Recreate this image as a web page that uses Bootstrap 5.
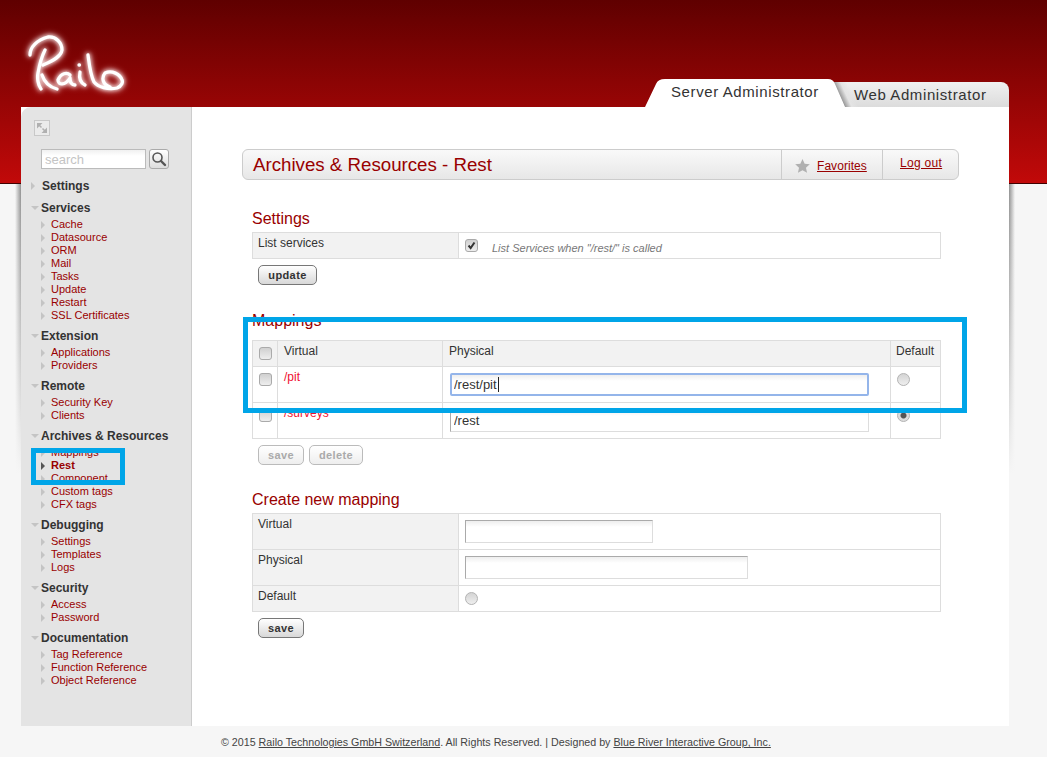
<!DOCTYPE html>
<html lang="en">
<head>
    <meta charset="utf-8">
    <title>Archives &amp; Resources - Rest</title>
    <link rel="stylesheet" href="https://cdn.jsdelivr.net/npm/bootstrap@5.3.0/dist/css/bootstrap.min.css">
    <style>
        body {
            position: relative;
            min-height: 757px;
            font-family: "Liberation Sans", Arial, sans-serif;
            font-size: 12px;
            color: #333;
            background:
                linear-gradient(#400000, #400000) 0 183px / 100% 1px no-repeat,
                linear-gradient(#5f0000, #c20909) 0 0 / 100% 184px no-repeat,
                linear-gradient(rgba(246, 246, 246, 0), #f6f6f6) 15px 184px / 6px 290px no-repeat,
                linear-gradient(to right, rgba(0, 0, 0, 0), rgba(0, 0, 0, .42)) 15px 184px / 6px 290px no-repeat,
                linear-gradient(rgba(246, 246, 246, 0), #f6f6f6) 1009px 184px / 6px 290px no-repeat,
                linear-gradient(to left, rgba(0, 0, 0, 0), rgba(0, 0, 0, .42)) 1009px 184px / 6px 290px no-repeat,
                #f6f6f6;
        }

        /* header */
        .top-bar {
            height: 107px;
            padding-right: 38px;
        }

        .logo-mark {
            margin: 32px 0 0 24px;
            filter: drop-shadow(0 0 2px #fff) drop-shadow(0 0 3px rgba(255, 210, 210, .7));
        }

        .tab-server, .tab-web {
            display: flex;
            align-items: center;
            letter-spacing: .6px;
            color: #333;
            font-size: 15px;
        }

        .tab-server {
            position: relative;
            z-index: 1;
            width: 200px;
            height: 28px;
            padding: 0 0 2px 26px;
            background: #fff;
            clip-path: path("M0 28 L11 5 Q13 0 20 0 L183 0 Q188 0 190 5 L200 28 Z");
        }

        .tab-web {
            width: 177px;
            height: 25px;
            margin-left: -13px;
            padding: 2px 0 0 22px;
            border-radius: 0 8px 0 0;
            background:
                linear-gradient(65deg, transparent 11px, #999 12px, #e4e4e4 18px, transparent 24px),
                linear-gradient(#f0f0f0, #dcdcdc);
        }

        /* page frame */
        .page-frame {
            width: 988px;
            height: 619px;
            margin-left: 21px;
            background: #fff;
        }

        .side-col {
            flex: 0 0 171px;
            padding: 13px 0 0 10px;
            border-right: 1px solid #ccc;
            border-top-left-radius: 10px;
            background: #e4e4e4;
        }

        .expand-box {
            display: block;
            width: 16px;
            height: 16px;
            margin: 0 0 13px 3px;
        }

        .search-row {
            gap: 3px;
            margin: 0 0 9px 10px;
        }

        .search-box {
            width: 105px;
            height: 20px;
            padding: 0 3px;
            border: 1px solid #bbb;
            border-radius: 0;
            font-size: 13px;
            line-height: 18px;
            background: linear-gradient(#f0f0f0, #fff 6px);
        }

        .search-box::placeholder {
            color: #c4c4c4;
        }

        .search-go {
            width: 20px;
            height: 20px;
            padding: 0;
            border: 1px solid #aaa;
            border-radius: 3px;
            background: linear-gradient(#fff, #ddd);
        }

        .side-group {
            margin-bottom: 6px;
        }

        .side-group.group-solo {
            margin-bottom: 7px;
        }

        .side-head, .side-link {
            display: flex;
            align-items: center;
        }

        .side-head {
            height: 15px;
            margin-bottom: 3px;
            font-weight: 700;
            color: #333;
        }

        .side-head::before {
            content: "";
            width: 0;
            margin-right: 7px;
            border-style: solid;
            border-width: 4px 0 4px 4px;
            border-color: transparent transparent transparent #c4c4c4;
        }

        .side-head.is-open::before {
            margin-right: 2px;
            border-width: 4px 4px 0;
            border-color: #c4c4c4 transparent transparent;
        }

        .side-link {
            height: 13px;
            padding-left: 10px;
            font-size: 11px;
            color: #900;
            text-decoration: none;
        }

        .side-link::before {
            content: "";
            width: 0;
            margin-right: 6px;
            border-style: solid;
            border-width: 4px 0 4px 4px;
            border-color: transparent transparent transparent #c4c4c4;
        }

        .side-link.is-current {
            font-weight: 700;
        }

        .side-link.is-current::before {
            border-left-color: #555;
        }

        /* main column */
        .main-col {
            padding: 42px 50px 0;
        }

        .title-strip {
            height: 31px;
            margin-bottom: 28px;
            border: 1px solid #ccc;
            border-radius: 6px;
            background: linear-gradient(#f9f9f9, #e7e7e7);
        }

        .title-strip h1 {
            margin: 0;
            padding-left: 10px;
            font-size: 18.7px;
            line-height: 30px;
            font-weight: 400;
            color: #900;
        }

        .strip-cell {
            display: flex;
            align-items: center;
            border-left: 1px solid #ccc;
            letter-spacing: .05px;
        }

        .strip-cell a {
            color: #900;
        }

        .cell-fav {
            width: 101px;
            gap: 7px;
            padding: 2px 0 0 13px;
        }

        .cell-out {
            width: 76px;
            padding: 0 0 3px 17px;
            letter-spacing: .3px;
        }

        .form-block {
            margin: 0 18px 0 10px;
        }

        .form-block h2 {
            margin: 0 0 3px;
            padding-top: 1px;
            font-size: 16px;
            line-height: 20px;
            font-weight: 400;
            color: #900;
        }

        .table.res-table {
            --bs-table-border-color: #ddd;
            table-layout: fixed;
            width: 689px;
            margin: 0;
            font-size: 12px;
            line-height: 15px;
        }

        .table.res-table > tbody > tr > * {
            padding: 3px 6px;
            color: #333;
            font-weight: 400;
            background: #fff;
            box-shadow: none;
        }

        .table.res-table > tbody > tr > .cell-shade {
            background: #f2f2f2;
        }

        .table.res-table > tbody > tr > .cell-label {
            padding-left: 5px;
        }

        .table.res-table > tbody > tr > .cell-virtual {
            color: #f01030;
        }

        .table.res-table > tbody > tr > .cell-mid {
            padding-top: 6px;
        }

        .table.res-table > tbody > tr > .cell-flat {
            padding-bottom: 0;
        }

        .table.res-table > tbody > tr > .cell-narrow {
            padding-left: 5px;
            padding-right: 0;
        }

        .form-check-input.res-check {
            display: block;
            width: 13px;
            height: 13px;
            margin: 3px 0 0;
            border: 1px solid #aaa;
            background: linear-gradient(#d0d0d0, #eee);
            box-shadow: none;
        }

        .form-check-input.res-check:checked {
            background: url("data:image/svg+xml,%3Csvg xmlns='http://www.w3.org/2000/svg' viewBox='0 0 13 13'%3E%3Cpath d='M3 6.5l2.500 3L10 3' fill='none' stroke='%23333' stroke-width='2.4'/%3E%3C/svg%3E"), linear-gradient(#d0d0d0, #eee);
            border-color: #aaa;
        }

        .form-check-input.res-radio {
            display: block;
            width: 13px;
            height: 13px;
            margin: 3px 0 0;
            border: 1px solid #b4b4b4;
            background: linear-gradient(#d4d4d4, #eee);
            box-shadow: none;
        }

        .form-check-input.res-radio:checked {
            background: radial-gradient(circle, #555 0 2.5px, #ddd 3.5px);
            border-color: #b4b4b4;
        }

        .cell-mid .form-check-input {
            margin-top: 0;
        }

        .form-control.res-input {
            height: 23px;
            min-height: 0;
            padding: 1px 3px;
            border: 1px solid #ddd;
            border-top-color: #aaa;
            border-left-color: #aaa;
            border-radius: 0;
            font-size: 13px;
            color: #333;
            background: linear-gradient(#eee, #fff 6px);
            box-shadow: none;
        }

        /* focused field of the screenshot, the caret is part of its look */
        .form-control.res-input.is-focused {
            border: 2px solid #94b5ea;
            border-radius: 2px;
            padding: 0 2px;
            background:
                linear-gradient(#222, #222) 46px 2px / 1px 15px no-repeat,
                linear-gradient(#eee, #fff 6px);
        }

        .input-path {
            width: 419px;
            margin-left: 1px;
        }

        .input-short {
            width: 188px;
        }

        .input-long {
            width: 283px;
        }

        .hint-text {
            margin: 5px 0 0 14px;
            font-size: 11px;
            font-style: italic;
            color: #777;
        }

        .btn.res-btn {
            --bs-btn-padding-x: 0;
            --bs-btn-padding-y: 0;
            height: 20px;
            width: 46px;
            border: 1px solid #777;
            border-radius: 5px;
            font-size: 11px;
            line-height: 18px;
            font-weight: 700;
            letter-spacing: .4px;
            color: #333;
            background: linear-gradient(#fff, #d8d8d8);
        }

        .btn.res-btn:disabled {
            opacity: 1;
            border-color: #bbb;
            color: #aaa;
            background: linear-gradient(#fff, #eee);
        }

        .btn.btn-wide {
            width: 54px;
        }

        .btn.btn-update {
            width: 59px;
        }

        .btn-row {
            gap: 5px;
            margin: 6px 0 0 6px;
        }

        .gap-mappings {
            margin-top: 25px;
        }

        .gap-mappings h2 {
            margin-bottom: 9px;
        }

        .gap-create {
            margin-top: 24px;
        }

        /* footer */
        .page-foot {
            padding: 9px 0 0 221px;
            font-size: 10.7px;
            line-height: 14px;
            color: #444;
        }

        .page-foot a {
            color: #444;
        }

        /* blue highlight frames drawn over the screenshot */
        .mark-frame {
            position: absolute;
            z-index: 5;
            border: 5px solid #00a5e8;
            pointer-events: none;
        }

        .frame-table {
            left: 243px;
            top: 317px;
            width: 724px;
            height: 96px;
        }

        .frame-link {
            left: 31px;
            top: 448px;
            width: 94px;
            height: 37px;
        }
    </style>
</head>
<body>

<!-- Header -->
<header class="top-bar d-flex justify-content-between align-items-end">
    <svg class="logo-mark align-self-start" width="104" height="66" viewBox="0 0 104 66" fill="none" stroke="#fff" stroke-width="3.300" stroke-linecap="round" stroke-linejoin="round" role="img" aria-label="Railo">
        <path d="M6 23C6 15 13 8 24 5C32 4 38 11 38 18C37 24 31 28 19 33"/>
        <path d="M21 18C18 24 16 30 14 41C13 46 14 53 17 57"/>
        <path d="M18 43C20 49 25 55 33 57"/>
        <path d="M46 43C43 40 37 41 34 48C34 53 41 54 46 46C46 50 47 53 51 53"/>
        <path d="M56 40C55 45 55 50 61 53"/>
        <path d="M55 33h.5"/>
        <path d="M64 23C65 30 66 42 70 50C74 55 84 58 93 56C98 54 99 50 98 48C96 42 88 38 81 41C77 46 79 53 86 55"/>
    </svg>
    <div class="d-flex align-items-end">
        <div class="tab-server">Server Administrator</div>
        <div class="tab-web">Web Administrator</div>
    </div>
</header>

<!-- Frame -->
<div class="page-frame d-flex">
    <nav class="side-col">
        <svg class="expand-box" viewBox="0 0 16 16" fill="#b0b0b0" stroke="none">
            <rect x=".5" y=".5" width="15" height="15" fill="#ebebeb" stroke="#c8c8c8"/>
            <path d="M3 3h5.500L3 8.500zM13 13H7.500L13 7.500z"/>
            <path d="M5 5l2.500 2.500M11 11L8.500 8.500" stroke="#b0b0b0" stroke-width="1.500"/>
        </svg>
        <div class="search-row d-flex">
            <input class="form-control search-box" type="text" placeholder="search">
            <button class="btn search-go d-flex align-items-center justify-content-center" type="button" aria-label="Search">
                <svg width="16" height="16" viewBox="0 0 16 16" fill="none" stroke="#555">
                    <circle cx="6.500" cy="6.500" r="4.500" stroke-width="1.600"/>
                    <path d="M10 10l4 4" stroke-width="2.400" stroke-linecap="round"/>
                </svg>
            </button>
        </div>

        <div class="side-group group-solo"><div class="side-head">Settings</div></div>

        <div class="side-group">
            <div class="side-head is-open">Services</div>
            <a class="side-link" href="#">Cache</a>
            <a class="side-link" href="#">Datasource</a>
            <a class="side-link" href="#">ORM</a>
            <a class="side-link" href="#">Mail</a>
            <a class="side-link" href="#">Tasks</a>
            <a class="side-link" href="#">Update</a>
            <a class="side-link" href="#">Restart</a>
            <a class="side-link" href="#">SSL Certificates</a>
        </div>

        <div class="side-group">
            <div class="side-head is-open">Extension</div>
            <a class="side-link" href="#">Applications</a>
            <a class="side-link" href="#">Providers</a>
        </div>

        <div class="side-group">
            <div class="side-head is-open">Remote</div>
            <a class="side-link" href="#">Security Key</a>
            <a class="side-link" href="#">Clients</a>
        </div>

        <div class="side-group">
            <div class="side-head is-open">Archives &amp; Resources</div>
            <a class="side-link" href="#">Mappings</a>
            <a class="side-link is-current" href="#">Rest</a>
            <a class="side-link" href="#">Component</a>
            <a class="side-link" href="#">Custom tags</a>
            <a class="side-link" href="#">CFX tags</a>
        </div>

        <div class="side-group">
            <div class="side-head is-open">Debugging</div>
            <a class="side-link" href="#">Settings</a>
            <a class="side-link" href="#">Templates</a>
            <a class="side-link" href="#">Logs</a>
        </div>

        <div class="side-group">
            <div class="side-head is-open">Security</div>
            <a class="side-link" href="#">Access</a>
            <a class="side-link" href="#">Password</a>
        </div>

        <div class="side-group">
            <div class="side-head is-open">Documentation</div>
            <a class="side-link" href="#">Tag Reference</a>
            <a class="side-link" href="#">Function Reference</a>
            <a class="side-link" href="#">Object Reference</a>
        </div>
    </nav>

    <main class="main-col flex-grow-1">
        <div class="title-strip d-flex">
            <h1 class="flex-grow-1">Archives &amp; Resources - Rest</h1>
            <div class="strip-cell cell-fav">
                <svg width="15" height="14" viewBox="0 0 16 15" fill="#b0b0b0">
                    <path d="M8 0l2.300 5 5.500.6-4.100 3.700 1.200 5.400L8 12l-4.900 2.700 1.200-5.400L.2 5.600 5.700 5z"/>
                </svg>
                <a href="#">Favorites</a>
            </div>
            <div class="strip-cell cell-out"><a href="#">Log out</a></div>
        </div>

        <section class="form-block">
            <h2>Settings</h2>
            <table class="table table-bordered res-table">
                <colgroup><col style="width:206px"><col></colgroup>
                <tbody>
                <tr style="height:26px">
                    <th class="cell-shade cell-label" scope="row">List services</th>
                    <td class="cell-flat">
                        <div class="d-flex">
                            <input class="form-check-input res-check" type="checkbox" checked>
                            <span class="hint-text">List Services when "/rest/" is called</span>
                        </div>
                    </td>
                </tr>
                </tbody>
            </table>
            <div class="btn-row d-flex">
                <button class="btn res-btn btn-update" type="button">update</button>
            </div>
        </section>

        <section class="form-block gap-mappings">
            <h2>Mappings</h2>
            <table class="table table-bordered res-table">
                <colgroup><col style="width:25px"><col style="width:165px"><col style="width:448px"><col></colgroup>
                <tbody>
                <tr style="height:26px">
                    <th class="cell-shade" scope="col"><input class="form-check-input res-check" type="checkbox"></th>
                    <th class="cell-shade" scope="col">Virtual</th>
                    <th class="cell-shade" scope="col">Physical</th>
                    <th class="cell-shade cell-narrow" scope="col">Default</th>
                </tr>
                <tr style="height:36px">
                    <td class="cell-mid"><input class="form-check-input res-check" type="checkbox"></td>
                    <td class="cell-virtual">/pit</td>
                    <td class="cell-mid"><input class="form-control res-input input-path is-focused" type="text" value="/rest/pit"></td>
                    <td class="cell-mid"><input class="form-check-input res-radio" type="radio" name="defaultMapping"></td>
                </tr>
                <tr style="height:36px">
                    <td class="cell-mid"><input class="form-check-input res-check" type="checkbox"></td>
                    <td class="cell-virtual">/surveys</td>
                    <td class="cell-mid"><input class="form-control res-input input-path" type="text" value="/rest"></td>
                    <td class="cell-mid"><input class="form-check-input res-radio" type="radio" name="defaultMapping" checked></td>
                </tr>
                </tbody>
            </table>
            <div class="btn-row d-flex">
                <button class="btn res-btn" type="button" disabled>save</button>
                <button class="btn res-btn btn-wide" type="button" disabled>delete</button>
            </div>
        </section>

        <section class="form-block gap-create">
            <h2>Create new mapping</h2>
            <table class="table table-bordered res-table">
                <colgroup><col style="width:206px"><col></colgroup>
                <tbody>
                <tr style="height:36px">
                    <th class="cell-shade cell-label" scope="row">Virtual</th>
                    <td class="cell-mid"><input class="form-control res-input input-short" type="text"></td>
                </tr>
                <tr style="height:36px">
                    <th class="cell-shade cell-label" scope="row">Physical</th>
                    <td class="cell-mid"><input class="form-control res-input input-long" type="text"></td>
                </tr>
                <tr style="height:26px">
                    <th class="cell-shade cell-label" scope="row">Default</th>
                    <td><input class="form-check-input res-radio" type="radio" name="newDefault"></td>
                </tr>
                </tbody>
            </table>
            <div class="btn-row d-flex">
                <button class="btn res-btn" type="button">save</button>
            </div>
        </section>
    </main>
</div>

<footer class="page-foot">
    © 2015 <a href="#">Railo Technologies GmbH Switzerland</a>. All Rights Reserved. | Designed by <a href="#">Blue River Interactive Group, Inc.</a>
</footer>

<div class="mark-frame frame-table"></div>
<div class="mark-frame frame-link"></div>

<script src="https://cdn.jsdelivr.net/npm/bootstrap@5.3.0/dist/js/bootstrap.bundle.min.js"></script>
</body>
</html>
